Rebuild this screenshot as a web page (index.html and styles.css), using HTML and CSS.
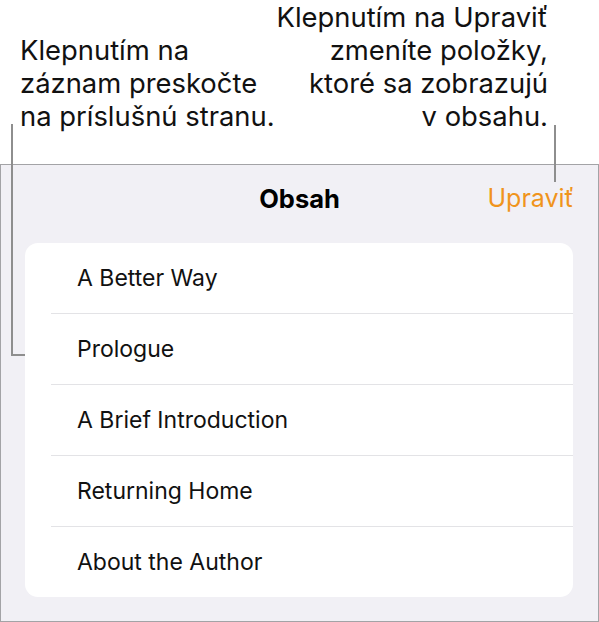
FILE: index.html
```html
<!DOCTYPE html>
<html lang="sk">
<head>
<meta charset="utf-8">
<link rel="stylesheet" href="styles.css">
</head>
<body>
<div class="page">
  <div class="notes">
    <p class="note note-left">Klepnutím na<br>záznam preskočte<br>na príslušnú stranu.</p>
    <p class="note note-right">Klepnutím na Upraviť<br>zmeníte položky,<br>ktoré sa zobrazujú<br>v obsahu.</p>
  </div>
  <div class="panel">
    <div class="navbar">
      <span class="title">Obsah</span>
      <span class="edit">Upraviť</span>
    </div>
    <ul class="card">
      <li class="row">A Better Way</li>
      <li class="row">Prologue</li>
      <li class="row">A Brief Introduction</li>
      <li class="row">Returning Home</li>
      <li class="row">About the Author</li>
    </ul>
  </div>
  <div class="callout callout-left"></div>
  <div class="callout callout-right"></div>
</div>
</body>
</html>
```
FILE: styles.css
```css
html, body {
  margin: 0;
  padding: 0;
  background: #ffffff;
}
.page {
  position: relative;
  width: 599px;
  height: 622px;
  overflow: hidden;
  font-family: Inter, "Liberation Sans", sans-serif;
  color: #111111;
}
.notes {
  height: 164px;
  display: flex;
  justify-content: space-between;
  align-items: flex-end;
  box-sizing: border-box;
  padding: 0 51px 31px 20px;
}
.note {
  margin: 0;
  font-size: 27.4px;
  line-height: 33px;
  white-space: nowrap;
}
.note-right {
  text-align: right;
}
.panel {
  height: 458px;
  box-sizing: border-box;
  border: 1px solid #a3a3a6;
  background: #f1f0f5;
  display: flex;
  flex-direction: column;
}
.navbar {
  height: 78px;
  box-sizing: border-box;
  padding-bottom: 12px;
  display: flex;
  align-items: center;
  justify-content: center;
  position: relative;
}
.title {
  font-size: 25.5px;
  font-weight: 700;
  color: #000;
}
.edit {
  position: absolute;
  right: 24px;
  top: 0;
  height: 66px;
  display: flex;
  align-items: center;
  font-size: 25px;
  color: #f0941c;
}
.card {
  list-style: none;
  margin: 0 25px 0 24px;
  padding: 0;
  background: #ffffff;
  border-radius: 13px;
  height: 354px;
  display: flex;
  flex-direction: column;
}
.row {
  flex: 1;
  display: flex;
  align-items: center;
  margin-left: 26px;
  padding-left: 26px;
  font-size: 23px;
  color: #111;
  border-bottom: 1px solid #e3e3e6;
}
.row:last-child {
  border-bottom: none;
}
.callout {
  position: absolute;
  box-sizing: border-box;
}
.callout-left {
  left: 11px;
  top: 124px;
  width: 14px;
  height: 232px;
  border-left: 2px solid #8e8e8e;
  border-bottom: 2px solid #8e8e8e;
}
.callout-right {
  left: 554px;
  top: 125px;
  width: 2px;
  height: 57px;
  background: #8e8e8e;
}
```
